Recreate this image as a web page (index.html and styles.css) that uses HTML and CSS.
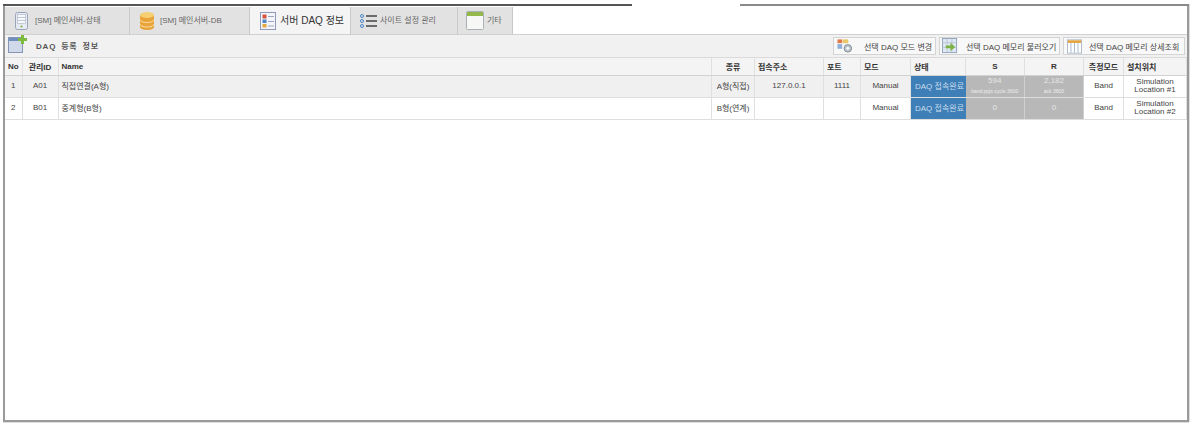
FILE: index.html
```html
<!DOCTYPE html>
<html lang="ko">
<head>
<meta charset="utf-8">
<title>DAQ 등록 정보</title>
<link rel="stylesheet" href="styles.css">
</head>
<body>
<div class="frame">
  <div class="topline"></div>
  <nav class="tabs">
    <div class="tab tab-1">
      <svg class="ticon" width="13" height="18" viewBox="0 0 13 18"><rect x=".5" y=".5" width="12" height="17" rx="2" fill="#e6ebf3" stroke="#9aa6b8"/><rect x="2.500" y="2.500" width="8" height="9" fill="#f6f8fb" stroke="#aab4c4" stroke-width=".6"/><path d="M2.500 5.500h8M2.500 8.500h8" stroke="#aab4c4" stroke-width=".7"/><circle cx="6.500" cy="14.500" r="1" fill="#6fae3c"/></svg>
      <span>[SM] 메인서버-상태</span>
    </div>
    <div class="tab tab-2">
      <svg class="ticon" width="14" height="18" viewBox="0 0 14 18"><path d="M0 3v12c0 1.700 3.100 3 7 3s7-1.300 7-3V3z" fill="#e8a33a"/><ellipse cx="7" cy="3" rx="7" ry="3" fill="#f5cf72"/><path d="M0 7.500c0 1.700 3.100 3 7 3s7-1.300 7-3M0 12c0 1.700 3.100 3 7 3s7-1.300 7-3" fill="none" stroke="#fbe3a4" stroke-width="1"/></svg>
      <span>[SM] 메인서버-DB</span>
    </div>
    <div class="tab tab-3 active">
      <svg class="ticon" width="16" height="18" viewBox="0 0 16 18"><rect x=".5" y=".5" width="15" height="17" fill="#f3f5fa" stroke="#8f9ab8"/><rect x="2.500" y="2.500" width="4" height="4" fill="#d8523f"/><rect x="2.500" y="7.500" width="4" height="3.500" fill="#4f86c6"/><rect x="2.500" y="12" width="4" height="3.500" fill="#e2a83a"/><path d="M8 4.500h6M8 9.500h6M8 14h6" stroke="#9aa6c0"/></svg>
      <span>서버 DAQ 정보</span>
    </div>
    <div class="tab tab-4">
      <svg class="ticon" width="17" height="14" viewBox="0 0 17 14"><circle cx="2" cy="2" r="1.500" fill="none" stroke="#4a86c8"/><circle cx="2" cy="7" r="1.500" fill="none" stroke="#4a86c8"/><circle cx="2" cy="12" r="1.500" fill="none" stroke="#4a86c8"/><path d="M6 2h11M6 7h11M6 12h11" stroke="#444" stroke-width="1.600"/></svg>
      <span>사이트 설정 관리</span>
    </div>
    <div class="tab tab-5">
      <svg class="ticon" width="18" height="19" viewBox="0 0 18 19"><rect x=".5" y=".5" width="17" height="18" rx="1" fill="#f7f8f6" stroke="#a9b0b8"/><rect x="1" y="1" width="16" height="4" fill="#94b94a"/></svg>
      <span>기타</span>
    </div>
  </nav>
  <div class="toolbar">
    <svg class="addicon" width="19" height="18" viewBox="0 0 19 18"><rect x=".5" y="2.500" width="14" height="15" fill="#cfd9ea" stroke="#8595b5"/><rect x="1" y="3" width="13" height="3" fill="#6f8fc0"/><path d="M13 0h3v3h3v3h-3v3h-3V6h-3V3h3z" fill="#7dbb3c"/></svg>
    <span class="title">DAQ 등록 정보</span>
    <div class="actions">
      <button class="btn btn-1">
        <svg width="16" height="16" viewBox="0 0 17 16"><rect x=".5" y="1" width="5" height="4" fill="#e07a4a"/><rect x="6" y="1" width="6" height="4" fill="#e8c76a"/><rect x=".5" y="6" width="5" height="5" fill="#8fb0d8"/><circle cx="11.500" cy="10.500" r="4" fill="#bcc4cc" stroke="#7f8a96"/><circle cx="11.500" cy="10.500" r="1.400" fill="#fff"/></svg>
        <span>선택 DAQ 모드 변경</span>
      </button>
      <button class="btn btn-2">
        <svg width="16" height="16" viewBox="0 0 17 17"><rect x=".5" y=".5" width="15" height="15" fill="#dfe8f2" stroke="#8fa2ba"/><path d="M.5 5h15M.5 10h15M5.500.5v15M10.500.5v15" stroke="#a8b8cc" stroke-width=".7"/><path d="M4 8h5V5l5 4.500L9 14v-3H4z" fill="#7cb342"/></svg>
        <span>선택 DAQ 메모리 불러오기</span>
      </button>
      <button class="btn btn-3">
        <svg width="15" height="15" viewBox="0 0 17 16"><rect x=".5" y=".5" width="16" height="15" fill="#fff" stroke="#a8b4c4"/><rect x="1" y="1" width="15" height="3" fill="#e5a63e"/><path d="M4.500 4v11M8.500 4v11M12.500 4v11" stroke="#9db4cf"/></svg>
        <span>선택 DAQ 메모리 상세조회</span>
      </button>
    </div>
  </div>
  <table class="grid">
    <colgroup>
      <col class="c-no"><col class="c-id"><col><col class="c-kind"><col class="c-addr"><col class="c-port"><col class="c-mode"><col class="c-state"><col class="c-s"><col class="c-r"><col class="c-meas"><col class="c-loc">
    </colgroup>
    <thead>
      <tr>
        <th>No</th><th>관리ID</th><th class="left">Name</th><th>종류</th><th class="left">접속주소</th><th class="left">포트</th><th class="left">모드</th><th class="left">상태</th><th>S</th><th>R</th><th>측정모드</th><th class="left">설치위치</th>
      </tr>
    </thead>
    <tbody>
      <tr class="odd">
        <td>1</td><td>A01</td><td class="left">직접연결(A형)</td><td>A형(직접)</td><td>127.0.0.1</td><td>1111</td><td>Manual</td><td class="state">DAQ 접속완료</td>
        <td class="stat"><div>594</div><small>band:ppjs cycle 3600</small></td>
        <td class="stat"><div>2,182</div><small>ack 3600</small></td>
        <td class="plain">Band</td><td class="plain loc">Simulation<br>Location #1</td>
      </tr>
      <tr>
        <td>2</td><td>B01</td><td class="left">중계형(B형)</td><td>B형(연계)</td><td></td><td></td><td>Manual</td><td class="state">DAQ 접속완료</td>
        <td class="stat">0</td><td class="stat">0</td>
        <td class="plain">Band</td><td class="plain loc">Simulation<br>Location #2</td>
      </tr>
    </tbody>
  </table>
</div>
</body>
</html>
```
FILE: styles.css
```css
* { box-sizing: border-box; }
html, body { margin: 0; height: 100%; background: #fff; }
body {
  padding: 4px 3px 0 3px;
  overflow: hidden;
  font-family: "Liberation Sans", "Noto Sans CJK KR", sans-serif;
  font-size: 8px;
  color: #444;
}
.frame {
  width: 1186px;
  height: 418px;
  border: 2px solid #9a9a9a;
  border-top: 0;
  box-shadow: 0 1px 0 #ddd, 1px 0 0 #ddd;
  background: #fff;
}
.topline {
  height: 3px;
  margin: 0 -2px;
  background: linear-gradient(to right, #555 0, #555 629px, #fff 629px, #fff 737px, #8a8a8a 737px) top / 100% 2px no-repeat;
}
.tabs {
  display: flex;
  height: 28px;
  border-bottom: 1px solid #d0d0d0;
}
.tab {
  display: flex;
  align-items: center;
  background: #e2e2e2;
  border-right: 1px solid #c9c9c9;
  color: #666;
  font-size: 8px;
  gap: 7px;
}
.tab span { margin-bottom: 2px; }
.tab-1 { width: 125px; padding-left: 10px; }
.tab-2 { width: 120px; padding-left: 10px; gap: 6px; }
.tab-3 { width: 101px; padding-left: 10px; gap: 4px; background: #f4f4f4; color: #333; font-size: 10px; }
.tab-4 { width: 107px; padding-left: 9px; gap: 3px; }
.tab-5 { width: 55px; padding-left: 8px; gap: 3px; }
.toolbar {
  display: flex;
  align-items: center;
  height: 23px;
  background: #f1f1f1;
  border-bottom: 1px solid #dadada;
  padding: 0 2px 0 3px;
}
.addicon { margin-top: -4px; }
.title { margin-left: 9px; margin-bottom: 2px; font-size: 8px; font-weight: 700; color: #555; letter-spacing: .8px; word-spacing: 2px; }
.actions { margin-left: auto; display: flex; gap: 3px; }
.btn {
  display: flex;
  align-items: center;
  height: 18px;
  padding: 0 3px;
  background: #f8f8f8;
  border: 1px solid #d4d4d4;
  font: inherit;
  font-size: 8px;
  color: #444;
  white-space: nowrap;
}
.btn svg { flex: none; }
.btn-1 { width: 103px; gap: 11px; }
.btn-2 { width: 121px; padding-left: 2px; gap: 8px; }
.btn-3 { width: 122px; gap: 7px; }
.grid {
  width: 1182px;
  border-collapse: collapse;
  table-layout: fixed;
}
.c-no { width: 17px; }
.c-id { width: 36px; }
.c-kind { width: 43px; }
.c-addr { width: 69px; }
.c-port { width: 37px; }
.c-mode { width: 50px; }
.c-state { width: 55px; }
.c-s, .c-r { width: 59px; }
.c-meas { width: 40px; }
.c-loc { width: 63px; }
th {
  height: 17px;
  padding: 0 1px;
  font-size: 8px;
  font-weight: 700;
  color: #333;
  background: #f4f4f4;
  border-right: 1px solid #e0e0e0;
  border-bottom: 1px solid #d2d2d2;
  text-align: center;
  white-space: nowrap;
}
td {
  height: 22px;
  padding: 0 1px 2px;
  text-align: center;
  font-size: 8px;
  color: #444;
  border-right: 1px solid #e0e0e0;
  border-bottom: 1px solid #dedede;
  white-space: nowrap;
  overflow: hidden;
}
.odd td { background: #f0f0f0; }
th.left, td.left { text-align: left; padding-left: 3px; }
td.state, .odd td.state { background: #3f7fb8; color: #c9dcec; border-right: 0; text-align: left; padding-left: 4px; }
td.stat, .odd td.stat {
  background: #b8b8b8;
  color: #e6e6e6;
  border-right: 1px solid #cfcfcf;
  line-height: 9px;
}
td.stat small { display: block; margin-top: 3px; font-size: 5px; line-height: 6px; color: #eee; }
td.plain, .odd td.plain { background: #fff; }
td.loc { line-height: 8px; padding-bottom: 0; }
```
